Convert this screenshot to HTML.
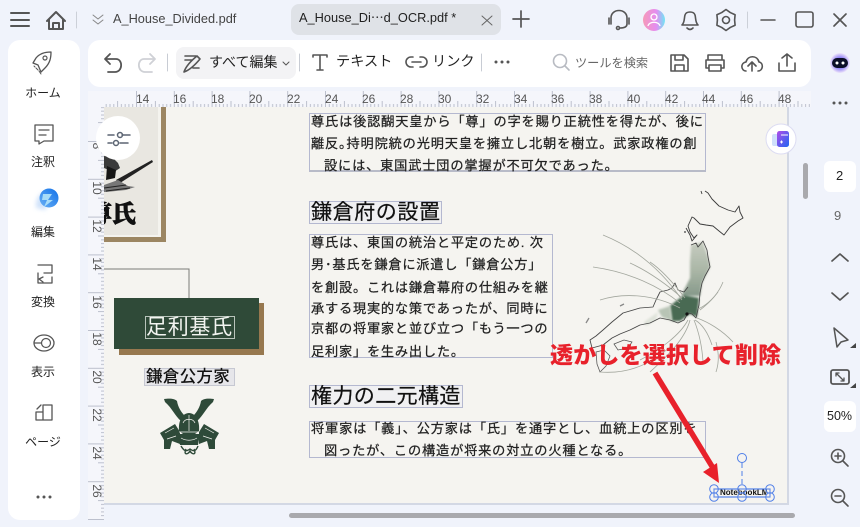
<!DOCTYPE html>
<html lang="ja"><head><meta charset="utf-8"><title>PDF</title>
<style>
html,body{margin:0;padding:0;width:860px;height:527px;overflow:hidden;background:#f0f3fb;font-family:"Liberation Sans","Noto Sans CJK JP",sans-serif;color:#222}
div,span{box-sizing:border-box}
.a{position:absolute}
.t{position:absolute;white-space:nowrap;line-height:20px;height:20px}
.s{font-size:12px;color:#222;text-align:center;width:72px;left:8px}
.b{position:absolute;border:1px solid #b4b8d0}
.d{font-size:13.2px;letter-spacing:.8px;color:#222;-webkit-text-stroke:.25px #222}
.r{font-size:12px;color:#555;line-height:14px;height:14px;top:92px}
.l{position:absolute;left:89px;width:16px;font-size:12px;color:#555;line-height:14px;height:14px;text-align:center;transform:rotate(90deg)}
</style></head><body>

<div class="a" style="left:8px;top:40px;width:72px;height:480px;background:#fff;border-radius:12px"></div>
<div class="a" style="left:88px;top:40px;width:723px;height:47px;background:#fff;border-radius:12px"></div>
<div class="a" style="left:291px;top:4px;width:210px;height:31px;background:#dfe2e7;border-radius:8px"></div>
<div class="a" style="left:176px;top:47px;width:120px;height:32px;background:#f3f3f5;border-radius:8px"></div>
<div class="a" style="left:824px;top:161px;width:32px;height:31px;background:#fff;border-radius:6px"></div>
<div class="a" style="left:824px;top:401px;width:32px;height:31px;background:#fff;border-radius:6px"></div>

<svg class="a" style="left:0;top:0" width="860" height="527" viewBox="0 0 860 527">
<defs>
<pattern id="pt" patternUnits="userSpaceOnUse" x="136" y="91" width="37.8" height="16">
<path d="M.5 0V16M4.3 13V16M8 13V16M11.8 13V16M15.6 13V16M19.4 10V16M23.2 13V16M27 13V16M30.7 13V16M34.5 13V16" stroke="#bcc0cd" stroke-width="1" fill="none"/></pattern>
<pattern id="pl" patternUnits="userSpaceOnUse" x="88" y="330" width="16" height="37.8">
<path d="M0 .5H16M13 4.3H16M13 8H16M13 11.8H16M13 15.6H16M10 19.4H16M13 23.2H16M13 27H16M13 30.7H16M13 34.5H16" stroke="#bcc0cd" stroke-width="1" fill="none"/></pattern>
</defs>
<rect x="88" y="91" width="723" height="16" fill="#f5f6fb"/>
<rect x="104" y="91" width="707" height="16" fill="url(#pt)"/>
<rect x="88" y="107" width="16" height="413" fill="#f5f6fb"/>
<rect x="88" y="107" width="16" height="413" fill="url(#pl)"/>
<rect x="104" y="107" width="683" height="396" fill="#f5f4f0"/>
<rect x="104" y="503" width="685" height="2" fill="#d3d8e4"/>
<rect x="787" y="107" width="2" height="398" fill="#d3d8e4"/>
</svg>

<span class="t r" style="left:136px">14</span><span class="t r" style="left:173px">16</span><span class="t r" style="left:211px">18</span><span class="t r" style="left:249px">20</span><span class="t r" style="left:287px">22</span><span class="t r" style="left:325px">24</span><span class="t r" style="left:362px">26</span><span class="t r" style="left:400px">28</span><span class="t r" style="left:438px">30</span><span class="t r" style="left:476px">32</span><span class="t r" style="left:514px">34</span><span class="t r" style="left:551px">36</span><span class="t r" style="left:589px">38</span><span class="t r" style="left:627px">40</span><span class="t r" style="left:665px">42</span><span class="t r" style="left:702px">44</span><span class="t r" style="left:740px">46</span><span class="t r" style="left:778px">48</span>
<span class="l" style="top:139px">8</span><span class="l" style="top:181px">10</span><span class="l" style="top:219px">12</span><span class="l" style="top:257px">14</span><span class="l" style="top:295px">16</span><span class="l" style="top:332px">18</span><span class="l" style="top:370px">20</span><span class="l" style="top:408px">22</span><span class="l" style="top:446px">24</span><span class="l" style="top:484px">26</span>

<div class="a" style="left:104px;top:107px;width:683px;height:396px;overflow:hidden">
<div class="a" style="left:-104px;top:-107px;width:860px;height:527px">
<div class="a" style="left:90px;top:100px;width:76px;height:142px;background:#9c8662"></div>
<div class="a" style="left:90px;top:100px;width:71px;height:137px;background:#f4f3ee"></div>
<div class="a" style="left:90px;top:100px;width:68px;height:135px;background:#e9e7e1"></div>
<span class="t" style="left:88px;top:200px;height:30px;font:900 24px/30px 'Liberation Serif','Noto Serif CJK SC',serif;color:#111;-webkit-text-stroke:.7px #111">尊氏</span>

<svg class="a" style="left:0;top:0" width="860" height="527" viewBox="0 0 860 527">
<defs><filter id="bl" x="-20%" y="-20%" width="140%" height="140%"><feGaussianBlur stdDeviation="1"/></filter>
<linearGradient id="th" x1="0" y1="0" x2="0" y2="1"><stop offset="0" stop-color="#c6ccc0"/><stop offset=".55" stop-color="#a9b5a5"/><stop offset="1" stop-color="#86998a"/></linearGradient></defs>
<!-- samurai sketch -->
<path d="M104 125L108 127L107 134L104 133Z" fill="#333"/>
<path d="M104 156L112 157L118 163L120 168L114 172L104 168Z" fill="#3a3a3a"/>
<path d="M107 166L116 170L115 178L106 180Z" fill="#161616"/>
<path d="M116 180L152 160L153 162L120 183Z" fill="#222"/>
<path d="M104 185L118 180L128 186L135 187L126 190L106 192L104 192Z" fill="#777"/>
<path d="M104 188L126 185M106 191L130 188" stroke="#222" stroke-width="1"/>
<path d="M104 269H189V298" fill="none" stroke="#7b7b78" stroke-width="1"/>
<rect x="119" y="303" width="145" height="52" fill="#97784f"/>
<rect x="114" y="298" width="145" height="51" fill="#2f4a38"/>

<!-- kabuto -->
<g fill="#2e4a39">
<path d="M164 399C171 398 175 399 177 401C178 407 181 412 185 416L181 421C175 416 172 408 165 402Z"/>
<path d="M214 399C207 398 203 399 201 401C200 407 197 412 193 416L197 421C203 416 206 408 213 402Z"/>
<path d="M179 431C178 420 183 413 189 413C195 413 200 420 199 431L195 434H183Z"/>
<path d="M160 433L175 424L180 432L180 444L172 441L170 449L164 449L164 440Z"/>
<path d="M219 433L204 424L199 432L199 444L207 441L209 449L215 449L215 440Z"/>
<path d="M178 434H200L198 445H180Z"/>
</g>
<g fill="none" stroke="#2e4a39" stroke-width="1.4"><path d="M181 446C184 451 186 452 190 449C194 452 196 451 198 446M186 449C183 455 188 455 190 451C192 455 197 455 194 449"/></g>
<g fill="none" stroke="#f5f4f0" stroke-width=".7"><path d="M179 432H199M181 438C186 441 192 441 197 438M183 423C185 418 193 418 195 423M189 415V431M165 433L174 428M214 433L205 428M167 439L176 436M212 439L203 436"/></g>

<!-- map -->
<path d="M691 245L703 242L708 257L710 267L702 283L700 296L682 296L684 290L690 278L690 262Z" fill="url(#th)" filter="url(#bl)"/>
<path d="M684 295L699 298L697 317L690 314L680 321L672 321L670 306L676 301Z" fill="#4a6b52" filter="url(#bl)"/>
<path d="M670 306L672 321L662 317L658 310Z" fill="#b8c4b5" filter="url(#bl)"/>
<path d="M644 322L658 312L656 320L646 326Z" fill="#dfe3da" filter="url(#bl)"/>
<path d="M705 191L708 193L712 199L719 206L728 210L735 212L739 206L740 212L743 218L738 221L730 227L724 235L719 231L713 226L706 225L700 224L694 218L692 217L688 226L690 232L694 238L697 235L692 241L690 235L686 228M701 191L702 194" fill="none" stroke="#3a3a3a" stroke-width=".9" stroke-linejoin="round"/>
<path d="M691 245L696 243L698 247L703 241L707 250L708 257L710 267L705 276L702 283L700 293L699 305L696 318L692 314L688 313L684 320L678 323L670 320L660 318L650 323L640 325L630 330L620 334L612 338M688 287L684 292L678 290L675 283L672 288L668 290L660 292L656 300L653 307L640 308L623 313L612 322L603 330L596 336L590 340L592 348L603 345L612 338" fill="none" stroke="#444" stroke-width=".85" stroke-linejoin="round"/>
<path d="M596 352L604 350L610 356L606 366L600 372L597 364ZM614 344L624 340L632 342L628 348L618 350Z" fill="none" stroke="#555" stroke-width=".75"/>
<path d="M586 323L589 318M620 306L624 304" stroke="#888" stroke-width="1.3"/>
<g fill="none" stroke="#a3a79e" stroke-width=".8">
<path d="M603 235C640 250 665 275 682 300"/>
<path d="M593 267C630 272 660 287 680 303"/>
<path d="M600 300C625 292 655 295 680 308"/>
<path d="M630 263C650 272 670 287 682 298"/>
<path d="M650 262C662 270 675 285 685 298"/>
<path d="M723 282C718 295 708 304 700 310"/>
<path d="M718 292C712 300 705 306 698 309"/>
<path d="M733 342C722 330 708 322 697 318"/>
<path d="M712 345C708 333 702 324 695 320"/>
<path d="M703 362C702 345 698 330 694 320"/>
<path d="M690 320C685 340 665 358 650 372"/>
<path d="M688 320C680 335 660 350 640 360"/>
<path d="M716 372C720 360 718 350 716 342"/>
<path d="M600 372C625 374 650 366 672 345"/>
</g>
<circle cx="687" cy="314" r="1.6" fill="#111"/>
<circle cx="685" cy="232" r="1" fill="#666"/>
</svg>

<!-- doc text -->
<div class="b" style="left:309px;top:113px;width:397px;height:59px;border-bottom:2px solid #b8bbc8"></div>
<span class="t d" style="left:311px;top:112px;letter-spacing:.85px">尊氏は後認醐天皇から「尊」の字を賜り正統性を得たが、後に</span>
<span class="t d" style="left:311px;top:134px;letter-spacing:.85px">離反｡持明院統の光明天皇を擁立し北朝を樹立。武家政権の創</span>
<span class="t d" style="left:324px;top:156px;letter-spacing:.85px">設には、東国武士団の掌握が不可欠であった。</span>

<div class="b" style="left:309px;top:201px;width:133px;height:23px;background:#f0f0f2"></div>
<span class="t" style="left:311px;top:202px;font-size:21px;letter-spacing:.6px;height:22px;line-height:22px;color:#111;-webkit-text-stroke:.2px #111">鎌倉府の設置</span>

<div class="b" style="left:309px;top:234px;width:244px;height:124px"></div>
<span class="t d" style="left:311px;top:233px">尊氏は、東国の統治と平定のため. 次</span>
<span class="t d" style="left:311px;top:255px">男･基氏を鎌倉に派遣し「鎌倉公方」</span>
<span class="t d" style="left:311px;top:278px">を創設。これは鎌倉幕府の仕組みを継</span>
<span class="t d" style="left:311px;top:299px">承する現実的な策であったが、同時に</span>
<span class="t d" style="left:311px;top:319px">京都の将軍家と並び立つ「もう一つの</span>
<span class="t d" style="left:311px;top:342px">足利家」を生み出した。</span>

<div class="b" style="left:309px;top:385px;width:154px;height:23px;background:#f0f0f2"></div>
<span class="t" style="left:311px;top:386px;font-size:21px;letter-spacing:.4px;height:22px;line-height:22px;color:#111;-webkit-text-stroke:.2px #111">権力の二元構造</span>

<div class="b" style="left:309px;top:421px;width:397px;height:37px"></div>
<span class="t d" style="left:311px;top:419px;letter-spacing:.85px">将軍家は「義」、公方家は「氏」を通字とし、血統上の区別を</span>
<span class="t d" style="left:324px;top:441px;letter-spacing:.85px">図ったが、この構造が将来の対立の火種となる。</span>

<div class="b" style="left:145px;top:316px;width:90px;height:23px;border-color:#b9c4bb"></div>
<span class="t" style="left:146px;top:316px;font-size:21px;letter-spacing:.7px;color:#f2f4f0;height:24px;line-height:24px">足利基氏</span>
<div class="b" style="left:144px;top:368px;width:91px;height:18px;background:#e6e6ea;border-color:#c6c8d2"></div>
<span class="t" style="left:146px;top:367px;font-size:16.5px;letter-spacing:.3px;color:#111;font-weight:500">鎌倉公方家</span>

<span class="t" style="left:550px;top:342px;font-size:23px;font-weight:900;letter-spacing:.2px;color:#e8212b;height:26px;line-height:26px">透かしを選択して削除</span>

<!-- watermark -->
<span class="t" style="left:720px;top:487px;font-size:8px;font-weight:700;color:#111;height:10px;line-height:11px;width:47px;overflow:hidden">NotebookLM</span>
<svg class="a" style="left:0;top:0" width="860" height="527" viewBox="0 0 860 527">
<path d="M655 373L713 468" stroke="#e8212b" stroke-width="5.5" fill="none"/>
<path d="M719 483L703 472L717 463Z" fill="#e8212b"/>
<g fill="none" stroke="#4f7fe8" stroke-width="1">
<rect x="714" y="489" width="56" height="8" stroke-width="1.2"/>
<path d="M742 463V485" stroke-dasharray="5 3"/>
<g fill="#f5f4f0" fill-opacity=".15"><circle cx="742" cy="458" r="4.5"/><circle cx="714" cy="489" r="4.3"/><circle cx="714" cy="497" r="4.3"/><circle cx="742" cy="489" r="4.3"/><circle cx="742" cy="497" r="4.3"/><circle cx="770" cy="489" r="4.3"/><circle cx="770" cy="497" r="4.3"/></g>
</g>
</svg>
</div></div>

<!-- chrome text -->
<span class="t" style="left:113px;top:9px;font-size:12.75px;color:#444">A_House_Divided.pdf</span>
<span class="t" style="left:299px;top:8px;font-size:12.8px;color:#1f1f1f">A_House_Di⋯d_OCR.pdf *</span>
<span class="t" style="left:209px;top:52px;font-size:14px;color:#222">すべて編集</span>
<span class="t" style="left:336px;top:52px;font-size:14.2px;color:#222">テキスト</span>
<span class="t" style="left:432px;top:52px;font-size:14.2px;color:#222">リンク</span>
<span class="t" style="left:575px;top:53px;font-size:12.2px;color:#666">ツールを検索</span>

<span class="t s" style="top:83px;left:7px">ホーム</span>
<span class="t s" style="top:152px;left:7px">注釈</span>
<span class="t s" style="top:222px;left:7px">編集</span>
<span class="t s" style="top:292px;left:7px">変換</span>
<span class="t s" style="top:362px;left:7px">表示</span>
<span class="t s" style="top:432px;left:7px">ページ</span>

<span class="t" style="left:836px;top:166px;font-size:13px;color:#222">2</span>
<span class="t" style="left:834px;top:206px;font-size:13px;color:#666">9</span>
<span class="t" style="left:827px;top:406px;font-size:12.5px;color:#222">50%</span>

<!-- icons -->
<svg class="a" style="left:0;top:0" width="860" height="527" viewBox="0 0 860 527">
<defs>
<linearGradient id="av" x1="0" y1="0" x2="1" y2="0"><stop offset="0" stop-color="#f59ab8"/><stop offset=".6" stop-color="#e58cf0"/><stop offset="1" stop-color="#6fe6f5"/></linearGradient>
<linearGradient id="ai" x1="0" y1="1" x2="1" y2="0"><stop offset="0" stop-color="#6ab0f5"/><stop offset="1" stop-color="#1272e8"/></linearGradient>
<linearGradient id="bk" x1="0" y1="0" x2="1" y2="1"><stop offset="0" stop-color="#b04ce8"/><stop offset="1" stop-color="#1f66f2"/></linearGradient>
<radialGradient id="bot"><stop offset=".5" stop-color="#8a7cf5"/><stop offset="1" stop-color="#efe6fb"/></radialGradient>
<filter id="bl2" x="-30%" y="-30%" width="160%" height="160%"><feGaussianBlur stdDeviation="2"/></filter>
</defs>
<g fill="none" stroke="#555" stroke-width="1.6" stroke-linecap="round" stroke-linejoin="round">
<path d="M11 13H29M11 20H29M11 26H29" stroke-width="2"/>
<path d="M47 21L56 12L65 21M49 19V29H63V19M53 29V23H59V29" stroke-width="2"/>
<path d="M76.5 12V28" stroke="#ccd0d8" stroke-width="1"/>
<path d="M93 15L98 19L103 15M93 20L98 24L103 20" stroke="#888" stroke-width="1"/>
<path d="M482 16L492 25M492 16L482 25" stroke="#666" stroke-width="1"/>
<path d="M521 11V27M513 19H529" stroke-width="1.7"/>
<!-- headset -->
<path d="M611 24V18C611 8 627 8 627 18V24M609 18V24M629 18V24M627 24C627 27 624 28 620 28"/>
<circle cx="618" cy="28" r="1.5"/>
<!-- bell -->
<path d="M682 25C685 22 684 18 685 15C686 11 694 11 695 15C696 18 695 22 698 25ZM687 28C689 30 691 30 693 28"/>
<!-- gear -->
<path d="M726 9.500L730.300 12.550L735.100 14.750L734.600 20L735.100 25.250L730.300 27.450L726 30.500L721.700 27.450L716.900 25.250L717.400 20L716.900 14.750L721.700 12.550Z"/>
<circle cx="726" cy="20" r="3.500"/>
<path d="M747.500 12V28" stroke="#ccd0d8" stroke-width="1"/>
<path d="M761 20H775" stroke-width="1.500"/>
<rect x="796" y="12" width="17" height="15" rx="2" stroke-width="1.600"/>
<path d="M834 14L846 26M846 14L834 26" stroke-width="1.700"/>
<!-- undo redo -->
<path d="M105 59H116C123 59 123 72 115 72H108M110 54L105 59L110 64" stroke-width="1.800"/>
<path d="M155 59H144C137 59 137 72 145 72H152M150 54L155 59L150 64" stroke="#cfd1d6" stroke-width="1.800"/>
<path d="M167.500 54V71M299.500 54V71M481.500 54V71" stroke="#c8ccd4" stroke-width="1"/>
<!-- edit -->
<path d="M185 56H196M185 60H192M184 72C186 66 192 60 197 56L200 59C195 65 190 70 184 72ZM193 68H199"/>
<path d="M283 62L286 65L289 62" stroke-width="1"/>
<!-- T -->
<path d="M313 57V55H327V57M320 55V70M317 70H323" stroke-width="1.600"/>
<!-- link -->
<path d="M413 57H411A5 5 0 0 0 411 67H413M420 57H422A5 5 0 0 1 422 67H420M412 62H421"/>
<!-- search -->
<g stroke="#b8bbc2"><circle cx="560" cy="61" r="6.500"/><path d="M565 66L569 70"/></g>
<!-- save print upload share -->
<path d="M671 55H684L688 59V71H671ZM675 55V60H683V55M675 71V65H684V71"/>
<path d="M708 60V55H722V60M708 68H706V60H724V68H722M709 65H721V71H709Z"/>
<path d="M746 71C741 71 740 63 746 62C748 55 757 55 759 62C764 63 763 71 758 71M752 71V63M748 66L752 62L756 66"/>
<path d="M787 54V66M782 58L787 54L792 58M779 63V71H795V63"/>
<!-- sidebar -->
<path d="M36 58C40 53 46 52 51 52C51 58 50 63 45 68L41 72L38 65L33 63Z" stroke-width="1.300"/><circle cx="45" cy="58" r="2" stroke-width="1.200"/><path d="M36 68L38 70M39 71L41 74M34 66L35 67" stroke-width="1"/>
<path d="M35 125H53V141H44L39 144V141H35ZM39 130H49M39 135H46" stroke-width="1.300"/>
<path d="M38 264H52V272H44M52 282H38M52 276V282M38 272V282M43 276L39 278L43 281" stroke-width="1.300" transform="translate(0 1)"/>
<ellipse cx="44" cy="343" rx="10" ry="8" stroke-width="1.300"/><circle cx="46" cy="343" r="4.500" stroke-width="1.200"/><path d="M34 343H41" stroke-width="1.200"/>
<path d="M43 405H52V420H36V412H43ZM43 412V420M37 409L41 405" stroke-width="1.300"/>
<!-- right -->
<path d="M832 261L840 254L848 261" stroke-width="1.700"/>
<path d="M832 293L840 300L848 293" stroke-width="1.700"/>
<path d="M834 328L848 340L841 342L837 347Z" stroke-width="1.500"/>
<rect x="831" y="370" width="18" height="14" rx="2" stroke-width="1.800"/><path d="M836 373L844 381M836 373H839M836 373V376M844 381H841M844 381V378" stroke-width="1.300"/>
<circle cx="838" cy="456" r="6.500"/><path d="M835 456H841M838 453V459M843 461L848 466"/>
<circle cx="838" cy="496" r="6.500"/><path d="M835 496H841M843 501L848 506"/>
</g>
<path d="M850 348L856 348L856 343ZM850 388L856 388L856 383Z" fill="#444"/>
<circle cx="654" cy="20" r="11" fill="url(#av)"/>
<circle cx="654" cy="17" r="3" fill="none" stroke="#fff" stroke-width="1.300"/><path d="M648 26C649 21 659 21 660 26" fill="none" stroke="#fff" stroke-width="1.300"/>
<g fill="#555"><circle cx="496" cy="62" r="1.500"/><circle cx="502" cy="62" r="1.500"/><circle cx="508" cy="62" r="1.500"/><circle cx="38" cy="497" r="1.500"/><circle cx="44" cy="497" r="1.500"/><circle cx="50" cy="497" r="1.500"/><circle cx="834" cy="103" r="1.500"/><circle cx="840" cy="103" r="1.500"/><circle cx="846" cy="103" r="1.500"/></g>
<!-- AI logo -->
<path d="M36 208C35 198 41 191 48 192L46 210Z" fill="#bcd6f8" opacity=".7" filter="url(#bl2)"/>
<circle cx="49" cy="198" r="9.500" fill="url(#ai)"/><path d="M43 194H52L48 200H53L44 207L47 200H42Z" fill="#a7dcf8"/>
<!-- bot -->
<circle cx="840" cy="63" r="10" fill="url(#bot)"/><rect x="832" y="58" width="16" height="10" rx="5" fill="#0b0f28"/><circle cx="837" cy="63" r="1.500" fill="#fff"/><circle cx="843" cy="63" r="1.500" fill="#fff"/>
<!-- float buttons -->
<circle cx="118" cy="138" r="22" fill="#fff"/>
<g fill="none" stroke="#5b6472" stroke-width="1.500" stroke-linecap="round"><path d="M108 135H114M122 135H130M108 143H112M120 143H128"/><circle cx="120" cy="135" r="2.500"/><circle cx="116" cy="143" r="2.500"/></g>
<circle cx="781" cy="139" r="15" fill="#fff" stroke="#dcdcf2" stroke-width="1"/>
<rect x="772" y="134" width="8" height="12" rx="2" fill="#cfe0fb"/>
<rect x="777" y="131" width="12" height="16" rx="2.500" fill="url(#bk)"/>
<path d="M781 135H788M780 142H783M781.500 140.500V143.500" stroke="#fff" stroke-width="1"/>
<!-- scrollbars -->
<rect x="289" y="513" width="506" height="5" rx="2.500" fill="#a9a9ad"/>
<rect x="803" y="163" width="5" height="36" rx="2.500" fill="#a9a9ad"/>
</svg>
</body></html>
